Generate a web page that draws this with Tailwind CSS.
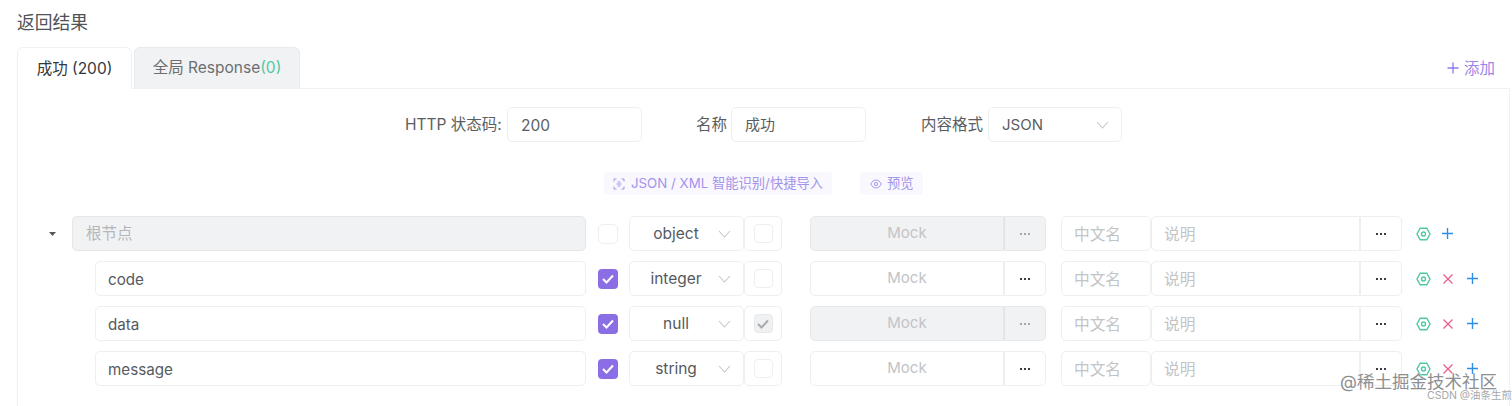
<!DOCTYPE html>
<html lang="zh"><head><meta charset="utf-8">
<script src="https://cdn.jsdelivr.net/npm/@tailwindcss/browser@4"></script>
</head>
<body class="bg-white overflow-hidden">
<div class="relative w-[1512px] h-[406px] overflow-hidden pl-[17px] pr-[2px] pt-[10px] text-[#555a5f] font-['Inter','Noto_Sans_CJK_SC',sans-serif] text-[16px]">
  <h2 class="h-[36px] text-[17.8px] leading-[25px] text-[#4f5256]">返回结果</h2>

  <div class="flex items-end h-[42px] relative">
    <div class="w-[115px] h-[42px] -mb-px z-10 bg-white border border-[#f0f1f2] border-b-0 rounded-t-[6px] flex items-center justify-center text-[#33373b] text-[15.5px]">成功 (200)</div>
    <div class="ml-[2px] w-[166px] h-[41px] bg-[#f1f2f3] border border-[#e8eaeb] border-b-0 rounded-t-[6px] flex items-center justify-center text-[15.5px] text-[#6b6f73]">全局 Response<span class="text-[#4fc9a4]">(0)</span></div>
    <div class="ml-auto mr-[15px] mb-[8px] flex items-center gap-[5px] text-[#9b86e8] text-[15.5px]">
      <svg class="w-[12px] h-[12px]" viewBox="0 0 12 12" fill="none" stroke="#8f78e6" stroke-width="1.3"><path d="M6 .5v11M.5 6h11"/></svg>添加
    </div>
  </div>

  <div class="border border-[#f0f1f2] border-b-0 h-[320px] pt-[18px]">
    <div class="flex items-center h-[35px] pl-[387px] text-[15.5px] text-[#5a5e62]">
      <span class="w-[102px] whitespace-nowrap">HTTP 状态码:</span>
      <div class="w-[135px] h-[35px] border border-[#eeeff0] rounded-[5px] flex items-center pl-[13px] pt-[2px] text-[15.5px]">200</div>
      <span class="ml-[54px] w-[35px] whitespace-nowrap">名称</span>
      <div class="w-[135px] h-[35px] border border-[#eeeff0] rounded-[5px] flex items-center pl-[13px] pt-[2px] text-[15px]">成功</div>
      <span class="ml-[55px] w-[67px] whitespace-nowrap">内容格式</span>
      <div class="w-[134px] h-[35px] border border-[#eeeff0] rounded-[5px] flex items-center justify-between pl-[13px] pr-[12px] text-[15px]"><span class="pt-[2px]">JSON</span>
        <svg class="w-[13px] h-[8px] shrink-0" viewBox="0 0 13 8" fill="none" stroke="#c4c6c9" stroke-width="1.1"><path d="M1 1l5.5 6L12 1"/></svg>
      </div>
    </div>

    <div class="flex items-center h-[23px] mt-[30px] pl-[586px] text-[13.3px] text-[#a493ea]">
      <div class="w-[228px] h-[23px] rounded-[4px] bg-[#f9f8fe] flex items-center pl-[9px] gap-[6px] whitespace-nowrap">
        <svg class="w-[12px] h-[12px]" viewBox="0 0 12 12" fill="none" stroke="#a493ea" stroke-width="1"><path d="M1 3.5V1h2.5M8.5 1H11v2.5M11 8.5V11H8.5M3.5 11H1V8.5M3.5 6h5M4.5 4h3M4.5 8h3"/></svg>
        JSON / XML 智能识别/快捷导入
      </div>
      <div class="ml-[28px] w-[63px] h-[23px] rounded-[4px] bg-[#f9f8fe] flex items-center pl-[10px] gap-[5px] whitespace-nowrap">
        <svg class="w-[12px] h-[10px]" viewBox="0 0 12 10" fill="none" stroke="#a493ea" stroke-width="1"><path d="M.7 5C2 2.4 3.9 1.1 6 1.1S10 2.4 11.3 5C10 7.6 8.1 8.9 6 8.9S2 7.6.7 5z"/><circle cx="6" cy="5" r="1.6"/></svg>
        预览
      </div>
    </div>

    <div class="mt-[21px] flex flex-col gap-[10px] pl-[29px]">
      <!-- root -->
      <div class="flex items-center h-[35px]">
        <div class="w-[25px] flex"><svg class="ml-[2px] w-[7px] h-[4px]" viewBox="0 0 7 4"><path d="M0 0h7L3.5 4z" fill="#55585c"/></svg></div>
        <div class="w-[514px] h-[35px] rounded-[5px] bg-[#f1f2f3] border border-[#e4e6e8] flex items-center pl-[13px] text-[#b4b7ba] text-[15.5px]">根节点</div>
        <div class="ml-[12px] w-[20px] h-[20px] rounded-[5px] border border-[#eeeff0] bg-white"></div>
        <div class="ml-[11px] w-[115px] h-[35px] border border-[#eeeff0] rounded-[5px] flex items-center pl-[12px] pr-[12px] justify-between text-[15.5px]"><span class="flex-1 text-center pr-[8px]">object</span><svg class="w-[13px] h-[8px] shrink-0" viewBox="0 0 13 8" fill="none" stroke="#c4c6c9" stroke-width="1.1"><path d="M1 1l5.5 6L12 1"/></svg></div>
        <div class="w-[38px] h-[35px] border border-[#eeeff0] rounded-[5px] flex items-center justify-center"><div class="w-[19px] h-[19px] rounded-[4px] border border-[#eeeff0]"></div></div>
        <div class="ml-[28px] w-[194px] h-[35px] rounded-l-[5px] bg-[#f1f2f3] border border-[#e6e8e9] flex items-center justify-center text-[#c2c4c6] text-[15px]">Mock</div>
        <div class="w-[42px] h-[35px] rounded-r-[5px] bg-[#f1f2f3] border border-[#e6e8e9] border-l-[#dfe1e3] flex items-center justify-center"><svg class="w-[10px] h-[2px]" viewBox="0 0 10 2"><path d="M0 0h2v2H0zM4 0h2v2H4zM8 0h2v2H8z" fill="#a5a7aa"/></svg></div>
        <div class="ml-[15px] w-[90px] h-[35px] border border-[#eeeff0] rounded-[5px] flex items-center pl-[12px] pt-[2px] text-[#c2c4c6] text-[15.7px]">中文名</div>
        <div class="w-[209px] h-[35px] border border-[#eeeff0] rounded-l-[5px] flex items-center pl-[12px] pt-[2px] text-[#c2c4c6] text-[15.7px]">说明</div>
        <div class="w-[42px] h-[35px] border border-[#eeeff0] rounded-r-[5px] flex items-center justify-center"><svg class="w-[10px] h-[2px]" viewBox="0 0 10 2"><path d="M0 0h2v2H0zM4 0h2v2H4zM8 0h2v2H8z" fill="#3a3c3f"/></svg></div>
        <svg class="ml-[14px] w-[15px] h-[14px]" viewBox="0 0 15 14" fill="none" stroke="#4fc9a4" stroke-width="1.4"><path d="M4.2 1.2h6.6L14 7l-3.2 5.8H4.2L1 7z"/><circle cx="7.5" cy="7" r="2"/></svg>
        <svg class="ml-[11px] w-[11px] h-[11px]" viewBox="0 0 11 11" fill="none" stroke="#2f8fe8" stroke-width="1.4"><path d="M5.5 0v11M0 5.5h11"/></svg>
      </div>

      <!-- code -->
      <div class="flex items-center h-[35px]">
        <div class="w-[48px]"></div>
        <div class="w-[491px] h-[35px] rounded-[5px] border border-[#eeeff0] flex items-center pl-[12px] pt-[3px] text-[15.2px]">code</div>
        <div class="ml-[12px] w-[20px] h-[20px] rounded-[4px] bg-[#8b6ee6] flex items-center justify-center"><svg class="w-[12px] h-[10px]" viewBox="0 0 12 10" fill="none" stroke="#fff" stroke-width="2"><path d="M1 5l3.5 3.5L11 1.5"/></svg></div>
        <div class="ml-[11px] w-[115px] h-[35px] border border-[#eeeff0] rounded-[5px] flex items-center pl-[12px] pr-[12px] justify-between text-[15.5px]"><span class="flex-1 text-center pr-[8px]">integer</span><svg class="w-[13px] h-[8px] shrink-0" viewBox="0 0 13 8" fill="none" stroke="#c4c6c9" stroke-width="1.1"><path d="M1 1l5.5 6L12 1"/></svg></div>
        <div class="w-[38px] h-[35px] border border-[#eeeff0] rounded-[5px] flex items-center justify-center"><div class="w-[19px] h-[19px] rounded-[4px] border border-[#eeeff0]"></div></div>
        <div class="ml-[28px] w-[194px] h-[35px] rounded-l-[5px] border border-[#eeeff0] flex items-center justify-center text-[#c2c4c6] text-[15px]">Mock</div>
        <div class="w-[42px] h-[35px] rounded-r-[5px] border border-[#eeeff0] flex items-center justify-center"><svg class="w-[10px] h-[2px]" viewBox="0 0 10 2"><path d="M0 0h2v2H0zM4 0h2v2H4zM8 0h2v2H8z" fill="#3a3c3f"/></svg></div>
        <div class="ml-[15px] w-[90px] h-[35px] border border-[#eeeff0] rounded-[5px] flex items-center pl-[12px] pt-[2px] text-[#c2c4c6] text-[15.7px]">中文名</div>
        <div class="w-[209px] h-[35px] border border-[#eeeff0] rounded-l-[5px] flex items-center pl-[12px] pt-[2px] text-[#c2c4c6] text-[15.7px]">说明</div>
        <div class="w-[42px] h-[35px] border border-[#eeeff0] rounded-r-[5px] flex items-center justify-center"><svg class="w-[10px] h-[2px]" viewBox="0 0 10 2"><path d="M0 0h2v2H0zM4 0h2v2H4zM8 0h2v2H8z" fill="#3a3c3f"/></svg></div>
        <svg class="ml-[14px] w-[15px] h-[14px]" viewBox="0 0 15 14" fill="none" stroke="#4fc9a4" stroke-width="1.4"><path d="M4.2 1.2h6.6L14 7l-3.2 5.8H4.2L1 7z"/><circle cx="7.5" cy="7" r="2"/></svg>
        <svg class="ml-[12px] w-[10px] h-[10px]" viewBox="0 0 10 10" fill="none" stroke="#ec5f8a" stroke-width="1.3"><path d="M.5.5l9 9M9.5.5l-9 9"/></svg>
        <svg class="ml-[14px] w-[11px] h-[11px]" viewBox="0 0 11 11" fill="none" stroke="#2f8fe8" stroke-width="1.4"><path d="M5.5 0v11M0 5.5h11"/></svg>
      </div>

      <!-- data -->
      <div class="flex items-center h-[35px]">
        <div class="w-[48px]"></div>
        <div class="w-[491px] h-[35px] rounded-[5px] border border-[#eeeff0] flex items-center pl-[12px] pt-[3px] text-[15.2px]">data</div>
        <div class="ml-[12px] w-[20px] h-[20px] rounded-[4px] bg-[#8b6ee6] flex items-center justify-center"><svg class="w-[12px] h-[10px]" viewBox="0 0 12 10" fill="none" stroke="#fff" stroke-width="2"><path d="M1 5l3.5 3.5L11 1.5"/></svg></div>
        <div class="ml-[11px] w-[115px] h-[35px] border border-[#eeeff0] rounded-[5px] flex items-center pl-[12px] pr-[12px] justify-between text-[15.5px]"><span class="flex-1 text-center pr-[8px]">null</span><svg class="w-[13px] h-[8px] shrink-0" viewBox="0 0 13 8" fill="none" stroke="#c4c6c9" stroke-width="1.1"><path d="M1 1l5.5 6L12 1"/></svg></div>
        <div class="w-[38px] h-[35px] border border-[#eeeff0] rounded-[5px] flex items-center justify-center"><div class="w-[19px] h-[19px] rounded-[4px] bg-[#f0f1f2] border border-[#e6e8e9] flex items-center justify-center"><svg class="w-[12px] h-[10px]" viewBox="0 0 12 10" fill="none" stroke="#a9abae" stroke-width="2"><path d="M1 5l3.5 3.5L11 1.5"/></svg></div></div>
        <div class="ml-[28px] w-[194px] h-[35px] rounded-l-[5px] bg-[#f1f2f3] border border-[#e6e8e9] flex items-center justify-center text-[#c2c4c6] text-[15px]">Mock</div>
        <div class="w-[42px] h-[35px] rounded-r-[5px] bg-[#f1f2f3] border border-[#e6e8e9] border-l-[#dfe1e3] flex items-center justify-center"><svg class="w-[10px] h-[2px]" viewBox="0 0 10 2"><path d="M0 0h2v2H0zM4 0h2v2H4zM8 0h2v2H8z" fill="#a5a7aa"/></svg></div>
        <div class="ml-[15px] w-[90px] h-[35px] border border-[#eeeff0] rounded-[5px] flex items-center pl-[12px] pt-[2px] text-[#c2c4c6] text-[15.7px]">中文名</div>
        <div class="w-[209px] h-[35px] border border-[#eeeff0] rounded-l-[5px] flex items-center pl-[12px] pt-[2px] text-[#c2c4c6] text-[15.7px]">说明</div>
        <div class="w-[42px] h-[35px] border border-[#eeeff0] rounded-r-[5px] flex items-center justify-center"><svg class="w-[10px] h-[2px]" viewBox="0 0 10 2"><path d="M0 0h2v2H0zM4 0h2v2H4zM8 0h2v2H8z" fill="#3a3c3f"/></svg></div>
        <svg class="ml-[14px] w-[15px] h-[14px]" viewBox="0 0 15 14" fill="none" stroke="#4fc9a4" stroke-width="1.4"><path d="M4.2 1.2h6.6L14 7l-3.2 5.8H4.2L1 7z"/><circle cx="7.5" cy="7" r="2"/></svg>
        <svg class="ml-[12px] w-[10px] h-[10px]" viewBox="0 0 10 10" fill="none" stroke="#ec5f8a" stroke-width="1.3"><path d="M.5.5l9 9M9.5.5l-9 9"/></svg>
        <svg class="ml-[14px] w-[11px] h-[11px]" viewBox="0 0 11 11" fill="none" stroke="#2f8fe8" stroke-width="1.4"><path d="M5.5 0v11M0 5.5h11"/></svg>
      </div>

      <!-- message -->
      <div class="flex items-center h-[35px]">
        <div class="w-[48px]"></div>
        <div class="w-[491px] h-[35px] rounded-[5px] border border-[#eeeff0] flex items-center pl-[12px] pt-[3px] text-[15.2px]">message</div>
        <div class="ml-[12px] w-[20px] h-[20px] rounded-[4px] bg-[#8b6ee6] flex items-center justify-center"><svg class="w-[12px] h-[10px]" viewBox="0 0 12 10" fill="none" stroke="#fff" stroke-width="2"><path d="M1 5l3.5 3.5L11 1.5"/></svg></div>
        <div class="ml-[11px] w-[115px] h-[35px] border border-[#eeeff0] rounded-[5px] flex items-center pl-[12px] pr-[12px] justify-between text-[15.5px]"><span class="flex-1 text-center pr-[8px]">string</span><svg class="w-[13px] h-[8px] shrink-0" viewBox="0 0 13 8" fill="none" stroke="#c4c6c9" stroke-width="1.1"><path d="M1 1l5.5 6L12 1"/></svg></div>
        <div class="w-[38px] h-[35px] border border-[#eeeff0] rounded-[5px] flex items-center justify-center"><div class="w-[19px] h-[19px] rounded-[4px] border border-[#eeeff0]"></div></div>
        <div class="ml-[28px] w-[194px] h-[35px] rounded-l-[5px] border border-[#eeeff0] flex items-center justify-center text-[#c2c4c6] text-[15px]">Mock</div>
        <div class="w-[42px] h-[35px] rounded-r-[5px] border border-[#eeeff0] flex items-center justify-center"><svg class="w-[10px] h-[2px]" viewBox="0 0 10 2"><path d="M0 0h2v2H0zM4 0h2v2H4zM8 0h2v2H8z" fill="#3a3c3f"/></svg></div>
        <div class="ml-[15px] w-[90px] h-[35px] border border-[#eeeff0] rounded-[5px] flex items-center pl-[12px] pt-[2px] text-[#c2c4c6] text-[15.7px]">中文名</div>
        <div class="w-[209px] h-[35px] border border-[#eeeff0] rounded-l-[5px] flex items-center pl-[12px] pt-[2px] text-[#c2c4c6] text-[15.7px]">说明</div>
        <div class="w-[42px] h-[35px] border border-[#eeeff0] rounded-r-[5px] flex items-center justify-center"><svg class="w-[10px] h-[2px]" viewBox="0 0 10 2"><path d="M0 0h2v2H0zM4 0h2v2H4zM8 0h2v2H8z" fill="#3a3c3f"/></svg></div>
        <svg class="ml-[14px] w-[15px] h-[14px]" viewBox="0 0 15 14" fill="none" stroke="#4fc9a4" stroke-width="1.4"><path d="M4.2 1.2h6.6L14 7l-3.2 5.8H4.2L1 7z"/><circle cx="7.5" cy="7" r="2"/></svg>
        <svg class="ml-[12px] w-[10px] h-[10px]" viewBox="0 0 10 10" fill="none" stroke="#ec5f8a" stroke-width="1.3"><path d="M.5.5l9 9M9.5.5l-9 9"/></svg>
        <svg class="ml-[14px] w-[11px] h-[11px]" viewBox="0 0 11 11" fill="none" stroke="#2f8fe8" stroke-width="1.4"><path d="M5.5 0v11M0 5.5h11"/></svg>
      </div>
    </div>
  </div>

  <div class="absolute left-[1340px] top-[370px] text-[17.5px] leading-[24px] text-[#8d8f91] whitespace-nowrap [text-shadow:0_0_2px_#fff]">@稀土掘金技术社区</div>
  <div class="absolute left-[1427px] top-[389px] text-[10.5px] leading-[13px] text-[#a5a7a9] whitespace-nowrap [text-shadow:0_0_2px_#fff]">CSDN @油条生煎</div>
</div>
</body></html>
